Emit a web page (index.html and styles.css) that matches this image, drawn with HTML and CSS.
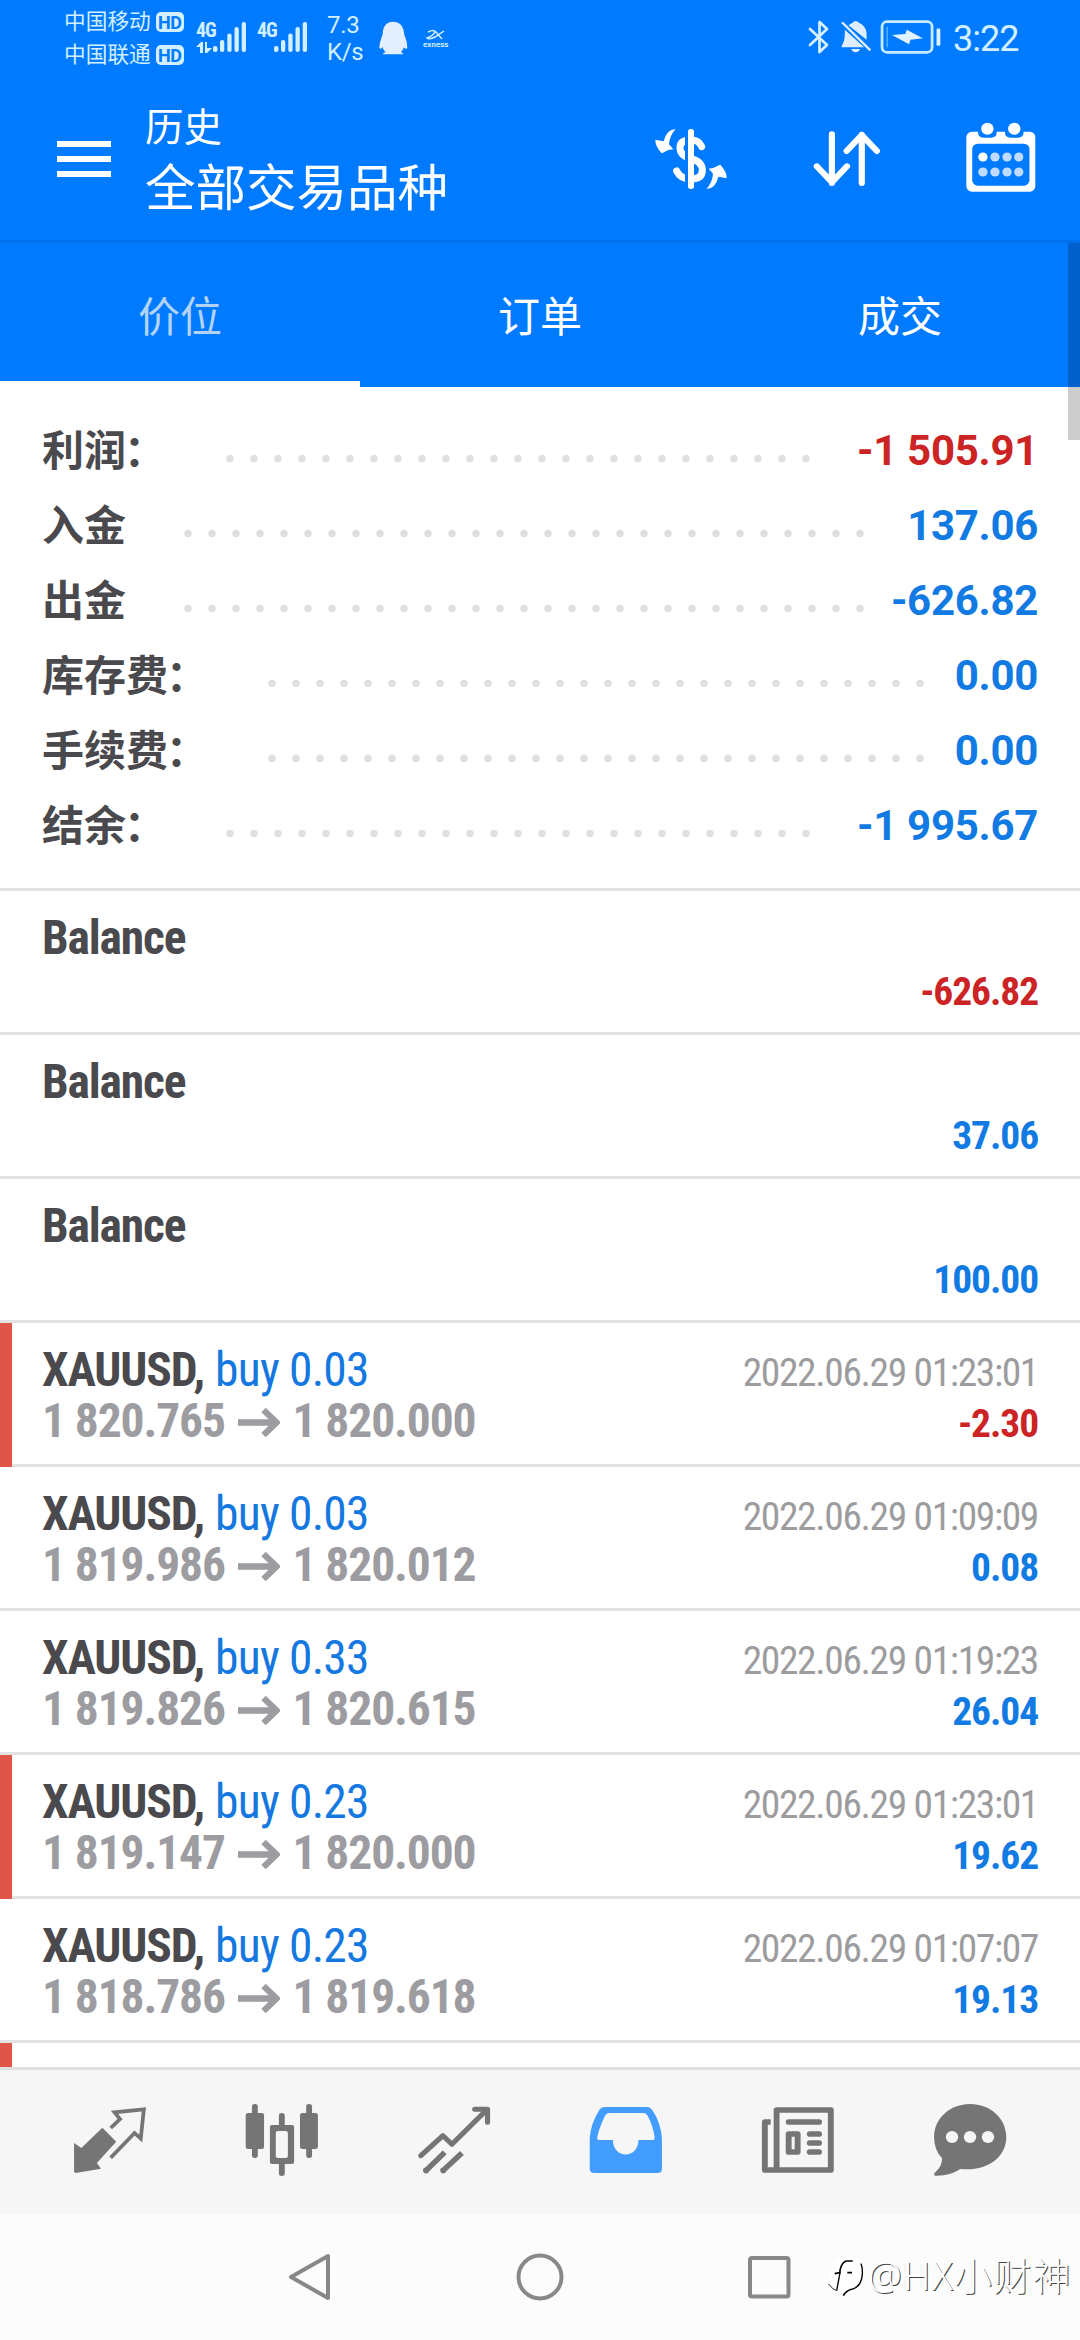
FILE: index.html
```html
<!DOCTYPE html>
<html lang="zh-CN">
<head>
<meta charset="utf-8">
<title>历史</title>
<link rel="stylesheet" href="styles.css">
</head>
<body>
<div class="phone">
  <header class="header">
    <div class="status">
      <div class="carriers">
        <div class="carrier"><span>中国移动</span><b class="hd">HD</b></div>
        <div class="carrier"><span>中国联通</span><b class="hd">HD</b></div>
      </div>
      <div class="signal">
        <div class="net"><b>4G</b>
          <svg width="16" height="11" viewBox="0 0 16 11" fill="#d2f0ff"><path d="M0 5 5 0H7V11H4V5ZM9 0H11V6H16L11 11H9Z"/></svg>
        </div>
        <svg width="33" height="32" viewBox="0 0 33 32" fill="#d2f0ff"><rect y="25" width="4.5" height="6" rx="2"/><rect x="7" y="19" width="4.3" height="12" rx="2"/><rect x="14.3" y="12.500" width="4.300" height="18.500" rx="2"/><rect x="21.500" y="6" width="4.300" height="25" rx="2"/><rect x="28.700" y="1" width="4.300" height="30" rx="2"/></svg>
      </div>
      <div class="signal signal-2">
        <div class="net"><b>4G</b></div>
        <svg width="33" height="32" viewBox="0 0 33 32" fill="#d2f0ff"><rect y="25" width="4.5" height="6" rx="2"/><rect x="7" y="19" width="4.3" height="12" rx="2"/><rect x="14.3" y="12.500" width="4.300" height="18.500" rx="2"/><rect x="21.500" y="6" width="4.300" height="25" rx="2"/><rect x="28.700" y="1" width="4.300" height="30" rx="2"/></svg>
      </div>
      <div class="speed"><span>7.3</span><span>K/s</span></div>
      <svg class="penguin" width="29" height="34" viewBox="1100 62 84 102" preserveAspectRatio="none" fill="#e3efff"><path d="M1141 64C1120 64 1111 80 1111 100C1108 112 1101 125 1101 142C1103 148 1107 145 1110 140C1112 148 1115 152 1120 155Q1111 157 1112 162H1170Q1171 157 1163 155C1168 151 1170 147 1172 141C1176 147 1181 146 1182 142C1182 125 1176 112 1173 102C1172 80 1162 64 1141 64Z"/></svg>
      <div class="exness"><svg width="24" height="11" viewBox="0 0 24 11" fill="none" stroke="#d2f0ff" stroke-width="1.500"><path d="M5 3Q11 0 12 3Q10 7 4 9Q6 11 12 8L21 2M12 2 19 10"/></svg><b>exness</b></div>
      <div class="status-right">
        <svg width="22" height="36" viewBox="0 0 22 36" fill="none" stroke="#d9f1ff" stroke-width="2.700" stroke-linecap="round" stroke-linejoin="round"><path d="M2 10 19 26 11.500 33V3L19 10 2 26"/></svg>
        <svg class="bell" width="30" height="34" viewBox="868 62 88 102" preserveAspectRatio="none" fill="#dfeeff"><path d="M880 92Q879 95 879 110Q879 125 870 140V144H936ZM890 78Q898 72 902 70Q910 60 921 70Q942 80 943 102V121ZM898 149H924Q920 159 911 159Q902 159 898 149Z"/><path d="M873 71 952 151" stroke="#dfeeff" stroke-width="7" stroke-linecap="round"/></svg>
        <svg class="battery" width="61" height="34" viewBox="986 62 178 100" preserveAspectRatio="none" fill="#e3f2ff"><rect x="992" y="67" width="146" height="90" rx="14" fill="none" stroke="#c5ecff" stroke-width="8"/><rect x="1151" y="87" width="11" height="51" rx="4"/><path d="M1007 82V142" stroke="#5cb4ff" stroke-width="4"/><path d="M1021 106 1060 103 1064 91 1111 116 1075 120 1071 133Z"/></svg>
        <span class="clock">3:22</span>
      </div>
    </div>
    <div class="toolbar">
      <svg class="menu" width="54" height="36" viewBox="0 0 54 36" fill="#fff"><path d="M0 0H54V6H0ZM0 15H54V21H0ZM0 30H54V36H0Z"/></svg>
      <div class="titles"><div class="subtitle">历史</div><div class="title">全部交易品种</div></div>
      <svg class="dollar" width="74" height="62" viewBox="39 54 222 186"><path d="M182 110Q174 90 150 90Q117 90 117 113Q117 137 150 146Q184 155 184 181Q184 207 150 207Q118 207 107 183" fill="none" stroke="#fff" stroke-width="21" stroke-linecap="round"/><path d="M132 50H150V240H132Z" fill="#007aff"/><rect x="141" y="57" width="18" height="180" rx="8" fill="#fff"/><g fill="#fff"><path d="M104 57Q76 58 68 94L43 89Q42 108 62 130L66 128Q82 118 97 118L84 103Q86 76 104 57Z"/><path transform="rotate(180 150 147)" d="M104 57Q76 58 68 94L43 89Q42 108 62 130L66 128Q82 118 97 118L84 103Q86 76 104 57Z"/></g></svg>
      <svg class="sort" width="68" height="58" viewBox="790 391 198 174" preserveAspectRatio="none" fill="none" stroke="#fff" stroke-width="18" stroke-linecap="round" stroke-linejoin="round"><path d="M845 404V550M801 500 845 548 889 500M932 550V405M888 454 932 406 976 454"/></svg>
      <svg class="calendar" width="70" height="70" viewBox="1236 367 203 210" preserveAspectRatio="none"><rect x="1237" y="396" width="200" height="180" rx="16" fill="#fff"/><g fill="#007aff"><rect x="1254" y="432" width="166" height="126" rx="16"/><path d="M1271 392H1325V398Q1325 414 1309 414H1287Q1271 414 1271 398ZM1349 392H1403V398Q1403 414 1387 414H1365Q1349 414 1349 398Z"/></g><g fill="#fff"><ellipse cx="1298" cy="387" rx="18" ry="18"/><ellipse cx="1376" cy="387" rx="18" ry="18"/><circle cx="1285" cy="472" r="13.500"/></g><g fill="#bfdcff"><circle cx="1320" cy="472" r="13.500"/><circle cx="1355" cy="472" r="13.500"/><circle cx="1389" cy="472" r="13.500"/><circle cx="1285" cy="517" r="13.500"/><circle cx="1320" cy="517" r="13.500"/><circle cx="1355" cy="517" r="13.500"/><circle cx="1389" cy="517" r="13.500"/></g></svg>
    </div>
  </header>
  <main class="content">
    <nav class="tabs"><span class="tab active">价位</span><span class="tab">订单</span><span class="tab">成交</span></nav>
    <section class="summary">
      <div class="sum"><span class="label">利润<i class="colon">：</i></span><i class="dots d25"></i><b class="loss">-1 505.91</b></div>
      <div class="sum"><span class="label">入金</span><i class="dots d29"></i><b>137.06</b></div>
      <div class="sum"><span class="label">出金</span><i class="dots d29"></i><b>-626.82</b></div>
      <div class="sum"><span class="label">库存费<i class="colon">：</i></span><i class="dots d28"></i><b>0.00</b></div>
      <div class="sum"><span class="label">手续费<i class="colon">：</i></span><i class="dots d28"></i><b>0.00</b></div>
      <div class="sum"><span class="label">结余<i class="colon">：</i></span><i class="dots d25"></i><b>-1 995.67</b></div>
    </section>
    <section class="deals">
      <article class="deal"><div class="line"><b class="symbol">Balance</b></div><div class="line"><span class="spacer"></span><b class="profit loss">-626.82</b></div></article>
      <article class="deal"><div class="line"><b class="symbol">Balance</b></div><div class="line"><span class="spacer"></span><b class="profit">37.06</b></div></article>
      <article class="deal"><div class="line"><b class="symbol">Balance</b></div><div class="line"><span class="spacer"></span><b class="profit">100.00</b></div></article>
      <article class="deal flagged"><div class="line"><span><b class="symbol">XAUUSD,</b> <span class="side">buy 0.03</span></span><time>2022.06.29 01:23:01</time></div><div class="line"><b class="prices">1 820.765 <svg class="arrow" viewBox="0 0 42 29"><path d="M0 14.500H38M25.500 2 38.500 14.500 25.500 27"/></svg> 1 820.000</b><b class="profit loss">-2.30</b></div></article>
      <article class="deal"><div class="line"><span><b class="symbol">XAUUSD,</b> <span class="side">buy 0.03</span></span><time>2022.06.29 01:09:09</time></div><div class="line"><b class="prices">1 819.986 <svg class="arrow" viewBox="0 0 42 29"><path d="M0 14.500H38M25.500 2 38.500 14.500 25.500 27"/></svg> 1 820.012</b><b class="profit">0.08</b></div></article>
      <article class="deal"><div class="line"><span><b class="symbol">XAUUSD,</b> <span class="side">buy 0.33</span></span><time>2022.06.29 01:19:23</time></div><div class="line"><b class="prices">1 819.826 <svg class="arrow" viewBox="0 0 42 29"><path d="M0 14.500H38M25.500 2 38.500 14.500 25.500 27"/></svg> 1 820.615</b><b class="profit">26.04</b></div></article>
      <article class="deal flagged"><div class="line"><span><b class="symbol">XAUUSD,</b> <span class="side">buy 0.23</span></span><time>2022.06.29 01:23:01</time></div><div class="line"><b class="prices">1 819.147 <svg class="arrow" viewBox="0 0 42 29"><path d="M0 14.500H38M25.500 2 38.500 14.500 25.500 27"/></svg> 1 820.000</b><b class="profit">19.62</b></div></article>
      <article class="deal"><div class="line"><span><b class="symbol">XAUUSD,</b> <span class="side">buy 0.23</span></span><time>2022.06.29 01:07:07</time></div><div class="line"><b class="prices">1 818.786 <svg class="arrow" viewBox="0 0 42 29"><path d="M0 14.500H38M25.500 2 38.500 14.500 25.500 27"/></svg> 1 819.618</b><b class="profit">19.13</b></div></article>
      <article class="deal flagged"></article>
    </section>
    <div class="scrollbar"></div>
  </main>
  <nav class="bottombar">
    <svg viewBox="209 249 220 222" preserveAspectRatio="none"><path fill="#757575" d="M215 369 236 384 297 323 337 365 281 429 293 446 220 459 215 456Z"/><path fill="none" stroke="#757575" stroke-width="11" d="M321 324 348 297 332 277 417 268 408 356 390 339 321 413"/></svg>
    <svg viewBox="709 249 220 222" preserveAspectRatio="none" fill="#757575"><rect x="714" y="279" width="53" height="108" rx="7"/><rect x="732" y="252" width="17" height="162" rx="8"/><rect x="871" y="279" width="52" height="108" rx="7"/><rect x="889" y="252" width="17" height="162" rx="8"/><rect x="810" y="279" width="17" height="50" rx="8"/><rect x="810" y="420" width="17" height="48" rx="8"/><path fill-rule="evenodd" d="M790 315H848Q854 315 854 321V426Q854 432 848 432H790Q784 432 784 426V321Q784 315 790 315ZM807 333Q801 333 801 339V408Q801 414 807 414H830Q836 414 836 408V339Q836 333 830 333Z"/></svg>
    <svg viewBox="1208 249 220 222" preserveAspectRatio="none" fill="none" stroke="#757575" stroke-width="15" stroke-linejoin="round"><path stroke-linecap="round" d="M1222 407 1286 347 1312 373 1410 272M1378 268H1415V307"/><path stroke-width="16" d="M1234 455 1291 397M1283 455 1341 399"/><path stroke-width="17" stroke-linecap="round" d="M1237 451V451.500M1287 451V451.500"/></svg>
    <svg viewBox="140 249 220 222" preserveAspectRatio="none" fill="#429dff"><path fill-rule="evenodd" d="M188 261H312Q320 261 326 270Q351 308 354 355V446Q354 459 341 459H158Q145 459 145 446V355Q148 310 174 268Q180 261 188 261ZM203 279Q193 279 189 288Q173 322 167 350Q165 360 174 360H212C212 418 286 418 286 360H326Q334 360 333 350Q327 315 313 288Q309 279 299 279Z"/></svg>
    <svg viewBox="640 249 220 222" preserveAspectRatio="none" fill="none" stroke="#757575" stroke-width="17" stroke-linejoin="round"><path d="M688 270H845V450H688ZM671 306H654V450H688"/><path stroke-linecap="round" d="M723 306H811M784 342H811M784 369H811M784 396H811"/><path d="M723 342H749V396H723Z"/></svg>
    <svg viewBox="1138 249 220 222" preserveAspectRatio="none" fill="#757575"><path d="M1248 252C1306 252 1353 294 1353 351C1353 412 1298 455 1220 447Q1190 468 1149 467Q1141 466 1146 458Q1168 440 1167 415Q1144 390 1144 351C1144 294 1191 252 1248 252Z"/><g fill="#f6f6f6"><circle cx="1196" cy="351" r="18"/><circle cx="1248" cy="351" r="18"/><circle cx="1300" cy="351" r="18"/></g></svg>
  </nav>
  <footer class="sysnav">
    <svg width="48" height="48" fill="none" stroke="#888" stroke-width="4" stroke-linejoin="round"><path d="M41 3V45L4 24Z"/></svg>
    <svg width="48" height="48" fill="none" stroke="#888" stroke-width="4"><circle cx="24" cy="24" r="21.500"/></svg>
    <svg width="48" height="48" fill="none" stroke="#888" stroke-width="4"><rect x="5" y="5" width="38.500" height="38.500" rx="2"/></svg>
    <div class="watermark">
      <svg width="42" height="48" viewBox="18 66 126 144" fill="none" stroke="#000" stroke-width="5"><path fill="#fff" stroke="none" d="M30 155Q20 80 82 72Q126 70 130 110Q130 170 72 186Z"/><path d="M44 122 60 119V112Q66 84 82 84H98M82 119H96M70 188Q78 172 98 168"/><path stroke-width="4" d="M98 168Q124 160 127 125Q128 100 122 92M60 119 50 173"/><path stroke-width="2.500" d="M50 173Q38 170 26 153"/></svg><span>@HX小财神</span>
    </div>
  </footer>
</div>
</body>
</html>
```
FILE: styles.css
```css
* { box-sizing: border-box; }
body { margin: 0; font-family: Roboto, "Noto Sans CJK SC", sans-serif; background: #fff; }
svg { display: block; flex: none; }
.phone { width: 1080px; height: 2340px; display: flex; flex-direction: column; overflow: hidden; }

/* header */
.header { height: 243px; background: #007aff; border-bottom: 3px solid #0070ec; color: #fff; }
.status { height: 76px; display: flex; align-items: flex-start; padding: 5px 62px 0 64px; color: #d2f0ff; }
.carriers { width: 132px; }
.carrier { display: flex; align-items: center; gap: 5px; height: 33px; font-size: 21.700px; line-height: 33px; white-space: nowrap; }
.hd { width: 28px; height: 20px; border-radius: 5px; background: #d2f0ff; color: #007aff; font-size: 18px; line-height: 21px; text-align: center; letter-spacing: -0.500px; }
.signal { display: flex; align-items: flex-end; margin-top: 16px; width: 61px; height: 32px; }
.signal-2 { width: 70px; }
.net { width: 17px; height: 31px; display: flex; flex-direction: column; justify-content: space-between; font-family: "Roboto Condensed", Roboto, sans-serif; font-size: 20px; line-height: 16px; }
.net b { letter-spacing: -1px; }
.speed { display: flex; flex-direction: column; font-size: 24px; line-height: 27px; letter-spacing: -0.300px; width: 52px; margin-top: 7px; }
.penguin { margin-top: 16px; }
.exness { margin: 24px 0 0 15px; width: 28px; font-size: 8px; line-height: 10px; }
.status-right { margin-left: auto; display: flex; align-items: center; height: 36px; margin-top: 14px; }
.bell { margin-left: 11px; }
.battery { margin-left: 9px; }
.clock { font-size: 36px; line-height: 36px; width: 65px; margin-left: 12px; letter-spacing: -1px; white-space: nowrap; padding-top: 3px; }
.toolbar { height: 164px; display: flex; align-items: center; padding: 2px 44px 0 57px; }
.titles { margin-left: 34px; width: 509px; margin-top: 6px; }
.subtitle { font-size: 38.500px; line-height: 52px; }
.title { font-size: 50.500px; line-height: 69px; }
.sort { margin-left: 85px; }
.calendar { margin: 0 0 4px auto; }

/* content */
.content { height: 1824px; overflow: hidden; position: relative; }
.tabs { display: flex; height: 144px; background: #007aff; }
.tab { flex: 1; text-align: center; color: #fff; font-size: 42px; line-height: 150px; height: 144px; }
.tab.active { color: #b3d3f5; border-bottom: 6px solid #fff; }
.scrollbar { position: absolute; right: 0; top: 0; width: 12px; height: 197px; background: rgba(0, 0, 0, 0.2); }
.summary { padding: 26px 42px 25px; border-bottom: 3px solid #e2e2e2; }
.sum { display: flex; height: 75px; font-size: 42px; line-height: 75px; }
.label { font-weight: 700; line-height: 78px; color: #4a4a4e; }
.colon { font-style: normal; display: inline-block; width: 42px; text-indent: -2px; }
.sum b { margin-left: auto; color: #127be3; letter-spacing: -0.300px; }
.sum .loss, .deal .loss { color: #cc2424; }
.dots { height: 75px; margin-left: 50px; background: radial-gradient(circle at 12px 45.500px, #e0e0e0 3.300px, transparent 4.200px) 0 0 / 24px 75px repeat-x; }
.d25 { width: 600px; }
.d28 { width: 672px; }
.d29 { width: 696px; }

/* deals */
.deal { height: 144px; padding: 22px 42px 0; background: linear-gradient(#e2e2e2, #e2e2e2) 0 100% / 100% 3px no-repeat; }
.deal.flagged { background: linear-gradient(#df5648, #df5648) 0 0 / 12px 100% no-repeat, linear-gradient(#e2e2e2, #e2e2e2) 0 100% / 100% 3px no-repeat; }
.line { display: flex; justify-content: space-between; align-items: baseline; height: 51px; line-height: 51px; font-family: "Roboto Condensed", Roboto, sans-serif; font-size: 47.500px; white-space: nowrap; letter-spacing: -0.800px; }
.spacer::before { content: "\200b"; }
.symbol { color: #4a4a4e; letter-spacing: -1.150px; }
.side { color: #1478e0; margin-left: 1px; }
.prices { color: #9c9ca1; letter-spacing: -1.100px; }
.arrow { display: inline-block; width: 42px; height: 29px; margin: 0 3px; fill: none; stroke: #9c9ca1; stroke-width: 6.300; }
.line time { color: #9c9c9e; font-size: 39.500px; font-weight: 400; letter-spacing: -1.370px; }
.profit { color: #127be3; font-size: 39.500px; letter-spacing: -1.100px; }

/* bottom bars */
.bottombar { height: 147px; background: #f6f6f6; border-top: 3px solid #e0e0e0; display: flex; padding: 0 24px 4px; align-items: center; justify-content: space-around; }
.bottombar svg { width: 76px; height: 74px; }
.sysnav { flex: 1; background: #fcfcfc; position: relative; display: flex; justify-content: center; gap: 181px; padding-top: 39px; }
.watermark { position: absolute; left: 826px; top: 41px; display: flex; font-size: 38px; line-height: 46px; letter-spacing: 1.300px; color: #fff; font-family: "Noto Sans", "Noto Sans CJK SC", sans-serif; font-weight: 300; white-space: nowrap; text-shadow: 1px 1px 0 #444; }
.watermark span { margin: -3px 0 0; }
```
